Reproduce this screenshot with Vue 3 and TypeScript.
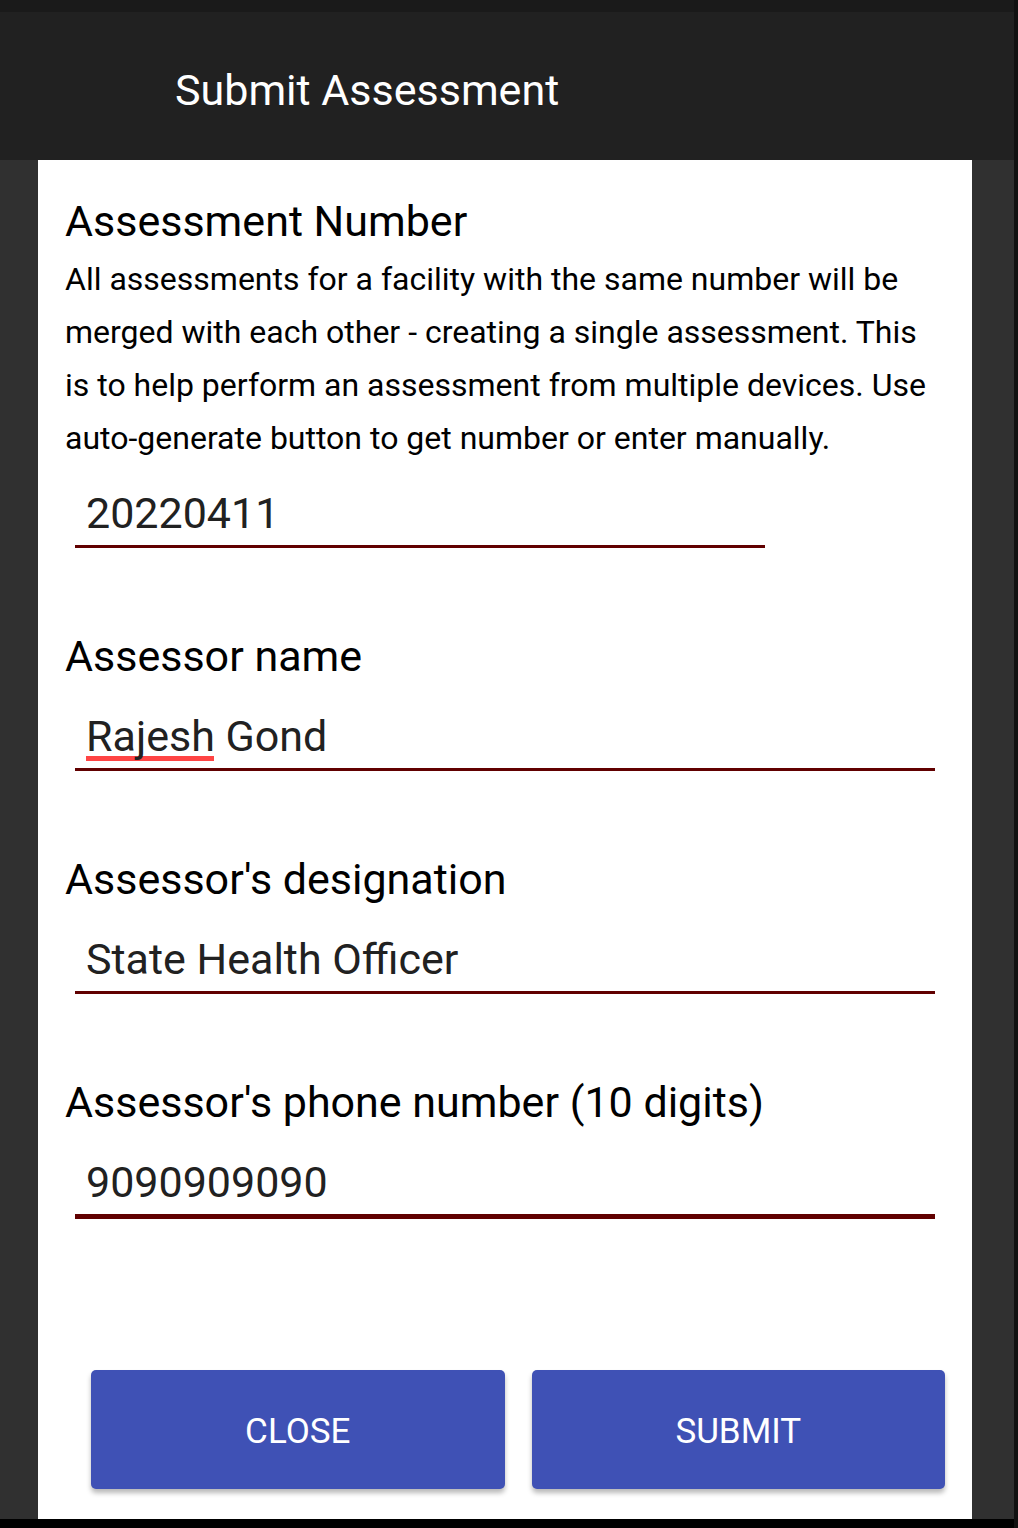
<script setup lang="ts">
import { ref } from 'vue'

const assessmentNumber = ref('20220411')
const assessorName = ref('Rajesh Gond')
const designation = ref('State Health Officer')
const phone = ref('9090909090')
</script>

<template>
  <div class="screen">
    <div class="status"></div>
    <header class="bar"><h1>Submit Assessment</h1></header>
    <main class="body">
      <form class="card" @submit.prevent>
        <section class="field">
          <label for="number">Assessment Number</label>
          <p>All assessments for a facility with the same number will be merged with each other - creating a single assessment. This is to help perform an assessment from multiple devices. Use auto-generate button to get number or enter manually.</p>
          <div class="entry short"><input id="number" v-model="assessmentNumber" type="text" /></div>
        </section>
        <section class="field">
          <label for="name">Assessor name</label>
          <div class="entry misspelt"><input id="name" v-model="assessorName" type="text" spellcheck="false" /></div>
        </section>
        <section class="field">
          <label for="designation">Assessor's designation</label>
          <div class="entry"><input id="designation" v-model="designation" type="text" /></div>
        </section>
        <section class="field">
          <label for="phone">Assessor's phone number (10 digits)</label>
          <div class="entry active"><input id="phone" v-model="phone" type="tel" /></div>
        </section>
        <div class="actions">
          <button type="button">CLOSE</button>
          <button type="submit">SUBMIT</button>
        </div>
      </form>
    </main>
    <div class="nav"></div>
  </div>
</template>

<style>
body {
  background: #303030;
}
</style>

<style scoped>
.screen {
  font-family: Roboto, sans-serif;
  color: #000;
  background: #303030;
  border-right: 4px solid #111;
}
.status {
  height: 12px;
  background: #1a1a1a;
}
.bar {
  padding: 48px 175px 40px;
  background: #212121;
}
h1 {
  margin: 0;
  font-size: 43px;
  font-weight: 400;
  line-height: 60px;
  color: #fff;
}
.body {
  padding: 0 42px 0 38px;
}
.card {
  padding: 32px 27px 30px;
  background: #fff;
}
.field {
  margin-bottom: 79px;
}
label {
  display: block;
  margin-bottom: 3px;
  font-size: 43px;
  line-height: 58px;
}
p {
  margin: 0;
  font-size: 32px;
  line-height: 53px;
}
.entry {
  position: relative;
  margin: 0 10px;
  border-bottom: 3px solid #610000;
}
.short {
  margin-right: 180px;
}
.active {
  border-bottom-width: 5px;
}
input {
  position: relative;
  display: block;
  width: 100%;
  height: 80px;
  padding: 18px 11px 2px;
  box-sizing: border-box;
  border: 0;
  outline: 0;
  background: transparent;
  font: 400 43px/60px Roboto, sans-serif;
  color: #212121;
}
.misspelt::before {
  content: "";
  position: absolute;
  left: 11px;
  bottom: 7px;
  width: 128px;
  height: 5px;
  background: #ff4444;
}
.actions {
  display: flex;
  gap: 27px;
  padding: 72px 0 0 26px;
}
button {
  flex: 1;
  height: 119px;
  padding: 4px 0 0;
  border: 0;
  border-radius: 5px;
  background: #3f51b5;
  box-shadow: 0 4px 5px rgba(0, 0, 0, 0.28);
  font: 400 35px/40px Roboto, sans-serif;
  color: #fff;
}
.nav {
  height: 9px;
  background: #000;
}
</style>
